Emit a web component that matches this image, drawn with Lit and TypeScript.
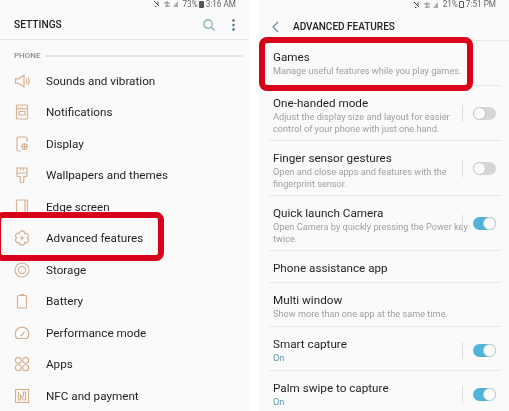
import { LitElement, html, css, svg } from "lit";
import { customElement } from "lit/decorators.js";

const I: Record<string, unknown> = {
  sound: svg`<path d="M1.500 5.800h3.200L10 2v12L4.700 10.200H1.500z"/><path d="M12 5.500c1 1.500 1 3.500 0 5M13.800 4c1.600 2.400 1.600 5.600 0 8"/>`,
  notif: svg`<rect x="2.500" y="1" width="11" height="14" rx=".8"/><path d="M2.500 4.800h11M4 3h.8M6 3h.8M8 3h.8M5 7.500h6v3.500H5z"/>`,
  display: svg`<path d="M7 15H4.500A1.500 1.500 0 0 1 3 13.500v-11A1.500 1.500 0 0 1 4.500 1h7A1.500 1.500 0 0 1 13 2.500V6"/><circle cx="10.500" cy="10.500" r="2.800"/><path d="M10.500 7.500v6M7.500 10.500h6"/>`,
  brush: svg`<path d="M3 1h10v7.500a1 1 0 0 1-1 1H9.800V14a1.800 1.800 0 0 1-3.600 0V9.500H4a1 1 0 0 1-1-1z"/><path d="M3 6h10M6.500 1v2.500M9.500 1v2.500"/>`,
  edge: svg`<rect x="2.500" y="1" width="11" height="15" rx="1"/><path d="M11 1v15"/>`,
  gear: svg`<path d="M5.400 3.500A2.600 2.600 0 0 1 10.600 3.500A2.600 2.600 0 0 1 13.200 8A2.600 2.600 0 0 1 10.600 12.500A2.600 2.600 0 0 1 5.400 12.500A2.600 2.600 0 0 1 2.800 8A2.600 2.600 0 0 1 5.400 3.500z"/><path d="M8 5.800v4.400M5.800 8h4.400"/>`,
  storage: svg`<circle cx="8" cy="8" r="7"/><circle cx="8" cy="8" r="3.600"/>`,
  battery: svg`<path d="M6 1.500h4M4.500 2.500h7a1 1 0 0 1 1 1v10.500a1 1 0 0 1-1 1h-7a1 1 0 0 1-1-1V3.500a1 1 0 0 1 1-1z"/>`,
  perf: svg`<path d="M3 13.500a6.800 6.800 0 1 1 10 0z" stroke-linejoin="round"/><path d="M6.500 11l4-4"/>`,
  apps: svg`<circle cx="4.300" cy="4.300" r="3"/><circle cx="11.700" cy="4.300" r="3"/><circle cx="4.300" cy="11.700" r="3"/><circle cx="11.700" cy="11.700" r="3"/>`,
  nfc: svg`<rect x="1.500" y="1.500" width="13" height="13"/><path d="M4.500 4v8h2V7l3 5h2V4h-2v5"/>`,
};

const LEFT: [string, string][] = [
  ["sound", "Sounds and vibration"],
  ["notif", "Notifications"],
  ["display", "Display"],
  ["brush", "Wallpapers and themes"],
  ["edge", "Edge screen"],
  ["gear", "Advanced features"],
  ["storage", "Storage"],
  ["battery", "Battery"],
  ["perf", "Performance mode"],
  ["apps", "Apps"],
  ["nfc", "NFC and payment"],
];

type R = { t: string; s?: unknown; on?: boolean; tog?: "on" | "off"; two?: boolean };
const RIGHT: R[] = [
  { t: "Games", s: "Manage useful features while you play games." },
  { t: "One-handed mode", s: html`Adjust the display size and layout for easier<br />control of your phone with just one hand.`, tog: "off", two: true },
  { t: "Finger sensor gestures", s: html`Open and close apps and features with the<br />fingerprint sensor.`, tog: "off", two: true },
  { t: "Quick launch Camera", s: html`Open Camera by quickly pressing the Power key<br />twice.`, tog: "on", two: true },
  { t: "Phone assistance app" },
  { t: "Multi window", s: "Show more than one app at the same time." },
  { t: "Smart capture", s: "On", on: true, tog: "on" },
  { t: "Palm swipe to capture", s: "On", on: true, tog: "on" },
];

const statusIcons = html`<svg class="sicons" viewBox="0 0 26 8">
  <path d="M1 1l5 5M5 1.500v3M2 6.500h1.500" class="sdark"/>
  <path d="M11 3h6M12 6h5M14 1v6" class="slight"/>
  <path d="M20 7l5-6v6z" class="sfill"/>
</svg>`;

@customElement("app-root")
export class AppRoot extends LitElement {
  static styles = css`
    :host { display: block; width: 509px; height: 411px; overflow: hidden; background: #fff; font-family: Roboto, "Liberation Sans", sans-serif; }
    .screen { position: relative; display: flex; width: 509px; height: 411px; overflow: hidden; justify-content: space-between; filter: blur(0.4px); }
    .panel { background: #fafafa; overflow: hidden; height: 411px; }
    .left { width: 249px; }
    .right { width: 250px; }
    .status { display: flex; justify-content: flex-end; align-items: center; gap: 1.500px; color: #666; font-size: 8.200px; line-height: 9px; white-space: nowrap; }
    .left .status { height: 8px; padding-right: 13px; }
    .right .status { height: 9px; padding: 0 13px 0 0; }
    .sicons { width: 26px; height: 8px; margin-right: 2px; fill: none; stroke-width: 1; }
    .sdark { stroke: #444; }
    .slight { stroke: #888; }
    .sfill { fill: #aaa; stroke: none; }
    .batt { width: 5px; height: 7px; background: #555; border-radius: 1px; }
    .battOut { background: none; border: 1px solid #555; width: 3px; height: 5px; }
    .head { display: flex; align-items: center; color: #222; font-weight: 500; white-space: nowrap; box-sizing: border-box; font-size: 10.200px; }
    .left .head { height: 32px; padding: 2px 14px 0 14px; border-bottom: 1px solid #e6e6e6; justify-content: space-between; }
    .right .head { height: 32px; padding: 4px 0 0 13px; gap: 14px; font-size: 10px; border-bottom: 1px solid #ececec; }
    .acts { display: flex; align-items: center; gap: 17px; }
    .search { width: 12px; height: 12px; fill: none; stroke: #6ea3a8; stroke-width: 1.200; }
    .dots { width: 3px; height: 12px; fill: #3f6d7c; }
    .back { width: 7px; height: 12px; fill: none; stroke: #5e8f98; stroke-width: 1.200; }
    .section { display: flex; align-items: center; gap: 4px; height: 25px; box-sizing: border-box; padding: 6px 6px 0 14px; color: #8b8b8b; font-size: 8px; font-weight: 500; }
    .section i { flex: 1; height: 2px; background: #e6e6e6; }
    .row { display: flex; align-items: center; height: 31.500px; padding-left: 14px; gap: 16px; font-size: 11.700px; color: #1f1f1f; white-space: nowrap; }
    .ico { width: 16px; height: 16px; flex: none; fill: none; stroke: #d6b08f; stroke-width: 1.150; }
    .item { display: flex; align-items: center; margin: 0 8px 0 10px; padding: 10px 0 6.500px 4px; border-bottom: 1px solid #e9e9e9; white-space: nowrap; }
    .head + .item { padding: 9px 0 8.500px 4px; }
    .item:last-child { border-bottom: 0; }
    .item.two { padding-bottom: 6px; }
    .item.two .ctl { margin-bottom: 3px; }
    .txt { flex: 1; min-width: 0; }
    .title { font-size: 11.700px; line-height: 14px; margin-bottom: 1px; color: #1f1f1f; }
    .title:last-child { margin-bottom: 0.500px; }
    .sub { font-size: 9.200px; line-height: 11.500px; color: #a0a0a0; }
    .sub.on { color: #5b97a6; }
    .ctl { display: flex; align-items: center; gap: 10px; margin-right: 5px; }
    .bar { width: 1px; height: 17px; background: #dcdcdc; }
    .tog { position: relative; width: 23px; height: 13px; border-radius: 7px; background: #d6d6d6; }
    .tog b { position: absolute; top: 0; left: 0; box-sizing: border-box; width: 13px; height: 13px; border-radius: 50%; background: #fbfbfb; border: 1px solid #c4c4c4; }
    .tog.on { background: #4fb3dc; }
    .tog.on b { left: auto; right: 0; border-color: #cfcfcf; }
    .mark { position: absolute; box-sizing: border-box; border: 6px solid #d9001c; border-radius: 8px; }
    .m1 { left: -5px; top: 212px; width: 169px; height: 49px; }
    .m2 { left: 259px; top: 37px; width: 214px; height: 54px; }
  `;

  render() {
    return html`<div class="screen">
      <div class="panel left">
        <div class="status">${statusIcons}<span>73%</span><span class="batt"></span><span>3:16 AM</span></div>
        <div class="head">
          <span>SETTINGS</span>
          <span class="acts">
            <svg class="search" viewBox="0 0 13 13"><circle cx="5.500" cy="5.500" r="4.500"/><path d="M8.800 8.800L12.500 12.500"/></svg>
            <svg class="dots" viewBox="0 0 3 12"><circle cx="1.500" cy="1.500" r="1.200"/><circle cx="1.500" cy="6" r="1.200"/><circle cx="1.500" cy="10.500" r="1.200"/></svg>
          </span>
        </div>
        <div class="section"><span>PHONE</span><i></i></div>
        ${LEFT.map(([k, t]) => html`<div class="row"><svg class="ico" viewBox="0 0 16 16">${I[k]}</svg><span>${t}</span></div>`)}
      </div>
      <div class="panel right">
        <div class="status">${statusIcons}<span>21%</span><span class="batt battOut"></span><span>7:51 PM</span></div>
        <div class="head">
          <svg class="back" viewBox="0 0 7 12"><path d="M6 1L1 6l5 5"/></svg>
          <span>ADVANCED FEATURES</span>
        </div>
        ${RIGHT.map((r) => html`<div class="item ${r.two ? "two" : ""}">
          <div class="txt">
            <div class="title">${r.t}</div>
            ${r.s ? html`<div class="sub ${r.on ? "on" : ""}">${r.s}</div>` : ""}
          </div>
          ${r.tog ? html`<div class="ctl"><span class="bar"></span><span class="tog ${r.tog}"><b></b></span></div>` : ""}
        </div>`)}
      </div>
      <div class="mark m1"></div>
      <div class="mark m2"></div>
    </div>`;
  }
}
